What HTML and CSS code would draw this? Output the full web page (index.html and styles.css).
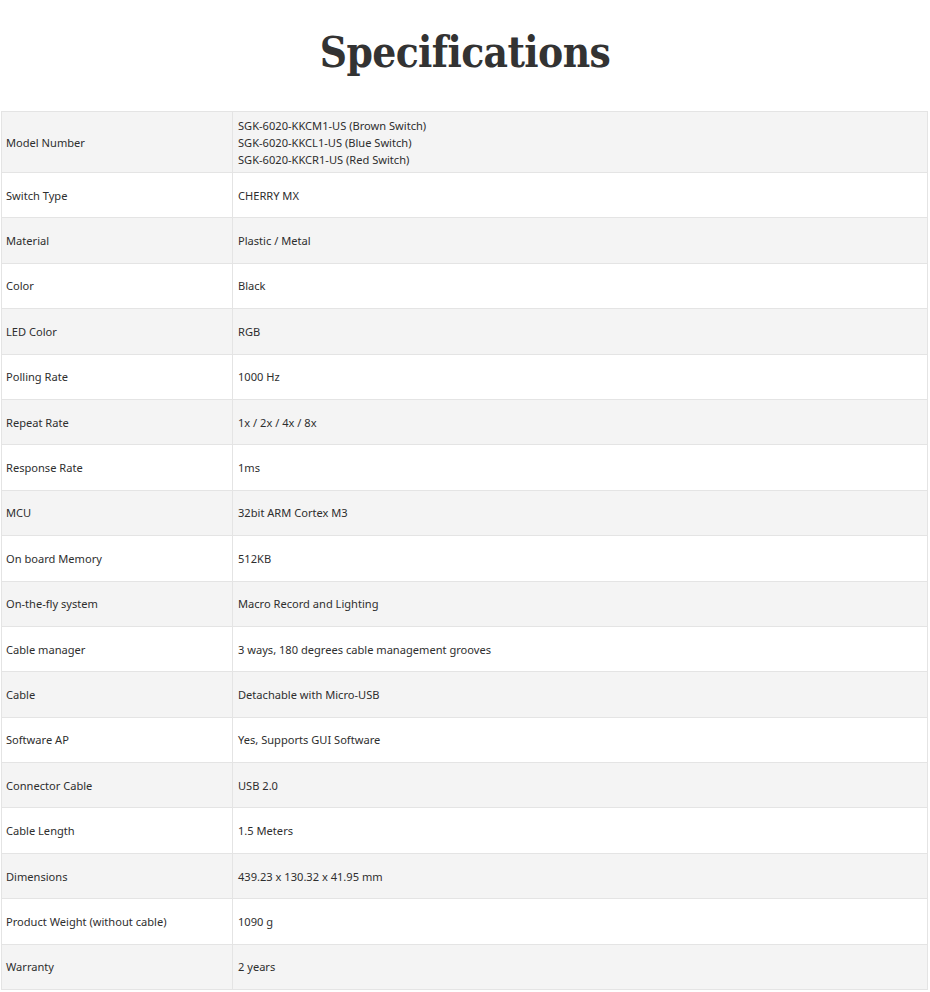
FILE: index.html
```html
<!DOCTYPE html>
<html>
<head>
<meta charset="utf-8">
<link rel="stylesheet" href="styles.css">
</head>
<body>
<h1 class="title">Specifications</h1>
<table class="specs">
<tbody>
<tr class="tall"><td>Model Number</td><td>SGK-6020-KKCM1-US (Brown Switch)<br>SGK-6020-KKCL1-US (Blue Switch)<br>SGK-6020-KKCR1-US (Red Switch)</td></tr>
<tr><td>Switch Type</td><td>CHERRY MX</td></tr>
<tr><td>Material</td><td>Plastic / Metal</td></tr>
<tr><td>Color</td><td>Black</td></tr>
<tr><td>LED Color</td><td>RGB</td></tr>
<tr><td>Polling Rate</td><td>1000 Hz</td></tr>
<tr><td>Repeat Rate</td><td>1x / 2x / 4x / 8x</td></tr>
<tr><td>Response Rate</td><td>1ms</td></tr>
<tr><td>MCU</td><td>32bit ARM Cortex M3</td></tr>
<tr><td>On board Memory</td><td>512KB</td></tr>
<tr><td>On-the-fly system</td><td>Macro Record and Lighting</td></tr>
<tr><td>Cable manager</td><td>3 ways, 180 degrees cable management grooves</td></tr>
<tr><td>Cable</td><td>Detachable with Micro-USB</td></tr>
<tr><td>Software AP</td><td>Yes, Supports GUI Software</td></tr>
<tr><td>Connector Cable</td><td>USB 2.0</td></tr>
<tr><td>Cable Length</td><td>1.5 Meters</td></tr>
<tr><td>Dimensions</td><td>439.23 x 130.32 x 41.95 mm</td></tr>
<tr><td>Product Weight (without cable)</td><td>1090 g</td></tr>
<tr><td>Warranty</td><td>2 years</td></tr>
</tbody>
</table>
</body>
</html>
```
FILE: styles.css
```css
html, body {
  margin: 0;
  padding: 0;
  background: #ffffff;
}
body {
  width: 930px;
  font-family: "Noto Sans", "Open Sans", sans-serif;
  color: #2e2e2e;
}
.title {
  margin: 0;
  height: 111px;
  padding-top: 27px;
  box-sizing: border-box;
  text-align: center;
  font-family: "DejaVu Serif Condensed", "DejaVu Serif", serif;
  font-weight: bold;
  font-size: 42px;
  line-height: 52px;
  color: #333333;
  letter-spacing: -0.6px;
}
.specs {
  margin-left: 1px;
  width: 927px;
  border-collapse: collapse;
  font-size: 11.1px;
  line-height: 17px;
}
.specs td {
  border: 1px solid #e4e4e4;
  padding: 0 5px;
  height: 45.4px;
  vertical-align: middle;
  box-sizing: border-box;
}
.specs td:first-child {
  width: 231px;
  padding-left: 4px;
}
.specs tr.tall td {
  height: 61px;
}
.specs tr:nth-child(odd) {
  background: #f4f4f4;
}
```
